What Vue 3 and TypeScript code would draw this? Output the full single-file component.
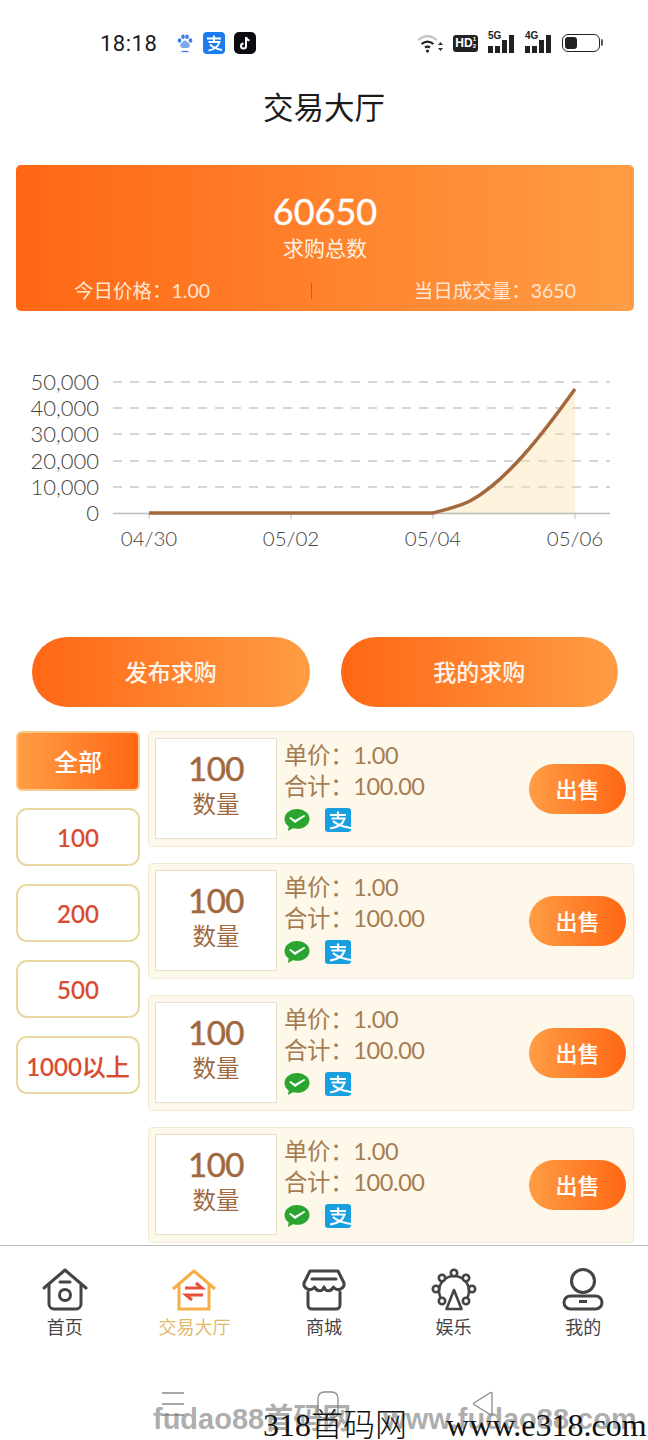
<template>
  <div class="page">
    <!-- 状态栏 -->
    <div class="status">
      <span class="time">18:18</span>
      <div class="status-apps">
        <svg width="18" height="20" viewBox="0 0 18 20" class="paw">
          <ellipse cx="3.5" cy="7.5" rx="1.8" ry="2.3" fill="#3f7fe0" />
          <ellipse cx="7" cy="3.8" rx="1.8" ry="2.3" fill="#3f7fe0" />
          <ellipse cx="11" cy="3.8" rx="1.8" ry="2.3" fill="#3f7fe0" />
          <ellipse cx="14.5" cy="7.5" rx="1.8" ry="2.3" fill="#3f7fe0" />
          <path d="M9 7.5c-2 0-2.5 2-4 3-1.500 1-1 4.500 1.500 4.500h5c2.500 0 3-3.500 1.500-4.500-1.500-1-2-3-4-3z" fill="#7fa9ea" />
          <path d="M5.500 18.500h7" stroke="#3f7fe0" stroke-width="1.300" />
        </svg>
        <svg width="22" height="22" viewBox="0 0 22 22">
          <rect width="22" height="22" rx="4" fill="#1b7cf0" />
          <path d="M4 6.500h14M11 3.500v6M5.500 10h11c-1.500 4.500-5 7.500-11 8.500M7 12.500c3 3 6.500 4.500 12 5.500" stroke="#fff" stroke-width="1.800" fill="none" />
        </svg>
        <svg width="22" height="22" viewBox="0 0 22 22">
          <rect width="22" height="22" rx="5" fill="#0c0c10" />
          <path d="M12 5v9a2.500 2.500 0 1 1-2.500-2.500M12 5c.3 2 1.600 3.200 3.500 3.400" stroke="#fff" stroke-width="2" fill="none" />
        </svg>
      </div>
      <div class="status-right">
        <svg width="26" height="20" viewBox="0 0 26 20">
          <path d="M1 7c6-5 13-5 19 0" stroke="#c4c4c4" stroke-width="2.200" fill="none" />
          <path d="M4.500 11c4-3.200 8-3.200 12 0M8 14.500c2-1.500 3-1.500 5 0" stroke="#222" stroke-width="2.200" fill="none" />
          <circle cx="10.500" cy="18" r="1.600" fill="#222" />
          <path d="M21 12l2.500-3 2.500 3zM21 15l2.500 3 2.500-3z" fill="#333" />
        </svg>
        <span class="hd">HD<small>1<br />2</small></span>
        <span class="signal">
          <span class="net">5G</span>
          <i class="b1"></i><i class="b2"></i><i class="b3"></i><i class="b4"></i>
        </span>
        <span class="signal">
          <span class="net">4G</span>
          <i class="b1"></i><i class="b2"></i><i class="b3"></i><i class="b4"></i>
        </span>
        <span class="battery"><i></i></span>
      </div>
    </div>

    <div class="title">交易大厅</div>

    <!-- 顶部统计 -->
    <div class="hero">
      <div class="hero-num">60650</div>
      <div class="hero-label">求购总数</div>
      <div class="hero-stats">
        <span>今日价格：1.00</span>
        <i class="hero-sep"></i>
        <span>当日成交量：3650</span>
      </div>
    </div>

    <!-- 走势图 -->
    <svg class="chart" width="648" height="326" viewBox="0 311 648 326">
      <line
        v-for="t in yTicks.slice(0, 5)"
        :key="t.label"
        x1="113"
        x2="610"
        :y1="t.y"
        :y2="t.y"
        class="grid"
      />
      <path
        d="M433 513 C447 509 458 507 470 501 C505 482 540 438 575 389 V513 Z"
        fill="rgba(250, 225, 170, 0.42)"
      />
      <line x1="113" x2="610" y1="513.500" y2="513.500" stroke="#bdbdbd" stroke-width="1.500" />
      <line
        v-for="t in xTicks"
        :key="t.label"
        :x1="t.x"
        :x2="t.x"
        y1="513"
        y2="519"
        stroke="#bdbdbd"
      />
      <path
        d="M149 513 H433 C447 509 458 507 470 501 C505 482 540 438 575 389"
        fill="none"
        stroke="#a4683e"
        stroke-width="3.500"
      />
      <text v-for="t in yTicks" :key="t.label" x="99" :y="t.y + 7.500" text-anchor="end" class="axis">{{ t.label }}</text>
      <text v-for="t in xTicks" :key="t.label" :x="t.x" y="546" text-anchor="middle" class="axis axis-x">{{ t.label }}</text>
    </svg>

    <div class="actions">
      <button type="button" class="action">发布求购</button>
      <button type="button" class="action">我的求购</button>
    </div>

    <div class="market">
      <div class="filters">
        <div
          v-for="(f, i) in filters"
          :key="f"
          :class="['filter', { active: i === 0 }]"
        >
          {{ f }}
        </div>
      </div>
      <div class="orders">
        <div v-for="n in 4" :key="n" class="order">
          <div class="qty">
            <div class="qty-num">100</div>
            <div class="qty-label">数量</div>
          </div>
          <div class="info">
            <div class="info-line">单价：1.00</div>
            <div class="info-line">合计：100.00</div>
            <div class="pay">
              <svg width="26" height="24" viewBox="0 0 26 24">
                <path d="M13 1C6 1 .5 5.400 .5 11c0 3 1.600 5.600 4.200 7.400L4 23l5-2.700c1.300.3 2.600.5 4 .5 7 0 12.500-4.400 12.500-9.900S20 1 13 1z" fill="#2aa52f" />
                <path d="M5 10l1.500-1 4.500 3L20 7l1.500 1-10.500 7z" fill="#fff" />
              </svg>
              <svg width="26" height="24" viewBox="0 0 26 24">
                <rect width="26" height="24" rx="3" fill="#189fe0" />
                <path d="M5 7h16M13 3.500V10M6.500 10.500h13C18 16 13 19.500 5 20.500M8 13c4 4 9 5.500 18 7" stroke="#fff" stroke-width="2.200" fill="none" />
              </svg>
            </div>
          </div>
          <button type="button" class="sell">出售</button>
        </div>
      </div>
    </div>

    <!-- 底部导航 -->
    <div class="tabbar">
      <div v-for="t in tabs" :key="t.label" :class="['tab', { current: t.current }]">
        <svg v-if="t.icon === 'home'" width="46" height="44" viewBox="0 0 46 44" class="tab-icon">
          <g fill="none" stroke="#444" stroke-width="3" stroke-linejoin="round" stroke-linecap="round">
            <path d="M2 20 23 2l21 18" />
            <path d="M7 17v19a5 5 0 0 0 5 5h22a5 5 0 0 0 5-5V17" />
            <path d="M18 14h10" />
            <circle cx="23" cy="27" r="5.500" />
          </g>
        </svg>
        <svg v-else-if="t.icon === 'trade'" width="46" height="44" viewBox="0 0 46 44" class="tab-icon">
          <g fill="none" stroke="#f4ae48" stroke-width="3" stroke-linejoin="miter">
            <path d="M2 21 23 3l21 18" />
            <path d="M8 16v25h30V16" />
          </g>
          <path d="M14 20h17l-6-5M32 27H15l6 5" fill="none" stroke="#e8503a" stroke-width="3" />
        </svg>
        <svg v-else-if="t.icon === 'shop'" width="46" height="44" viewBox="0 0 46 44" class="tab-icon">
          <g fill="none" stroke="#444" stroke-width="3" stroke-linejoin="round" stroke-linecap="round">
            <path d="M9 3h28l6 12c1 6-7 9-10.500 4-2.500 5-8 5-9.500 0-1.500 5-7 5-9.500 0C10 24 2 21 3 15z" />
            <path d="M11 11h24" />
            <path d="M7 24v13a4 4 0 0 0 4 4h24a4 4 0 0 0 4-4V24" />
          </g>
        </svg>
        <svg v-else-if="t.icon === 'wheel'" width="46" height="44" viewBox="0 0 46 44" class="tab-icon">
          <g fill="none" stroke="#444" stroke-width="2.600" stroke-linejoin="round">
            <path d="M23 8a15 15 0 0 1 15 15 15 15 0 0 1-5 11M13 34a15 15 0 0 1-5-11A15 15 0 0 1 23 8" />
            <circle cx="23" cy="5" r="3.200" fill="#fff" />
            <circle cx="35" cy="10" r="3.200" fill="#fff" />
            <circle cx="41" cy="21" r="3.200" fill="#fff" />
            <circle cx="35" cy="33" r="3.200" fill="#fff" />
            <circle cx="11" cy="33" r="3.200" fill="#fff" />
            <circle cx="5" cy="21" r="3.200" fill="#fff" />
            <circle cx="11" cy="10" r="3.200" fill="#fff" />
            <path d="M23 22 15.500 41h15zM23 22v4" />
          </g>
        </svg>
        <svg v-else width="46" height="44" viewBox="0 0 46 44" class="tab-icon">
          <g fill="none" stroke="#444" stroke-width="3">
            <circle cx="23" cy="13" r="11.500" />
            <rect x="4" y="28" width="38" height="13" rx="6.500" />
          </g>
          <path d="M19 33.500h8" stroke="#444" stroke-width="3" />
        </svg>
        <span class="tab-label">{{ t.label }}</span>
      </div>
    </div>

    <!-- 系统导航键 -->
    <div class="sysnav">
      <svg width="24" height="30" viewBox="0 0 24 30">
        <path d="M1 2h22M1 13h22M1 24h22" stroke="#8a8a8a" stroke-width="1.300" />
      </svg>
      <svg width="24" height="30" viewBox="0 0 24 30">
        <rect x="2" y="1" width="20" height="26" rx="6" fill="none" stroke="#8a8a8a" stroke-width="1.300" />
      </svg>
      <svg width="24" height="30" viewBox="0 0 24 30">
        <path d="M21 2v21a1 1 0 0 1-1.500.8L3 13.500a1 1 0 0 1 0-1.500L19.500 1.500A1 1 0 0 1 21 2z" fill="none" stroke="#8a8a8a" stroke-width="1.300" />
      </svg>
    </div>

    <!-- 水印 -->
    <div class="mark-grey">fudao88首码网<span class="mark-grey-url">www.fudao88.com</span></div>
    <div class="mark-black">318首码网<span class="mark-url">www.e318.com</span></div>
  </div>
</template>

<script setup lang="ts">
const yTicks = [
  { label: "50,000", y: 382 },
  { label: "40,000", y: 408 },
  { label: "30,000", y: 434 },
  { label: "20,000", y: 461 },
  { label: "10,000", y: 487 },
  { label: "0", y: 513 },
];

const xTicks = [
  { label: "04/30", x: 149 },
  { label: "05/02", x: 291 },
  { label: "05/04", x: 433 },
  { label: "05/06", x: 575 },
];

const filters = ["全部", "100", "200", "500", "1000以上"];

const tabs = [
  { label: "首页", icon: "home" },
  { label: "交易大厅", icon: "trade", current: true },
  { label: "商城", icon: "shop" },
  { label: "娱乐", icon: "wheel" },
  { label: "我的", icon: "user" },
];
</script>

<style>
html,
body {
  margin: 0;
  background: #fff;
}
</style>

<style scoped>
.page {
  position: relative;
  width: 648px;
  height: 1440px;
  overflow: hidden;
  background: #fff;
  font-family: Lato, "Noto Sans CJK SC", sans-serif;
  color: #222;
}

.status {
  display: flex;
  align-items: center;
  height: 86px;
  padding: 0 46px 0 100px;
  box-sizing: border-box;
}

.time {
  font-family: Roboto, sans-serif;
  font-size: 22px;
  letter-spacing: 0.5px;
  color: #1a1a1a;
}

.status-apps {
  display: flex;
  align-items: center;
  gap: 9px;
  margin-left: 19px;
}

.status-right {
  display: flex;
  align-items: center;
  gap: 10px;
  margin-left: auto;
}

.hd {
  display: flex;
  align-items: center;
  height: 17px;
  padding: 0 2px;
  border-radius: 3px;
  background: #222;
  color: #fff;
  font-family: "Liberation Sans", sans-serif;
  font-size: 12px;
  font-weight: 700;
}

.hd small {
  font-size: 6px;
  line-height: 7px;
}

.signal {
  position: relative;
  display: flex;
  align-items: flex-end;
  gap: 2.500px;
  width: 27px;
  height: 20px;
}

.signal .net {
  position: absolute;
  left: 0;
  top: -2px;
  font-family: "Liberation Sans", sans-serif;
  font-size: 10px;
  line-height: 10px;
  font-weight: 700;
  color: #222;
}

.signal i {
  width: 4.500px;
  background: #222;
}

.signal .b1 { height: 7px; }
.signal .b2 { height: 7px; }
.signal .b3 { height: 13px; }
.signal .b4 { height: 18px; }

.battery {
  position: relative;
  display: block;
  width: 38px;
  height: 18px;
  margin-right: 2px;
  box-sizing: border-box;
  border: 1.500px solid #222;
  border-radius: 6px;
  padding: 2px;
}

.battery::after {
  content: "";
  position: absolute;
  right: -4px;
  top: 4px;
  width: 2px;
  height: 7px;
  border-radius: 0 2px 2px 0;
  background: #555;
}

.battery i {
  display: block;
  width: 12px;
  height: 100%;
  background: #222;
  border-radius: 3px;
}

.title {
  height: 42px;
  line-height: 42px;
  text-align: center;
  font-size: 30.500px;
  color: #1b1b1b;
}

.hero {
  display: flex;
  flex-direction: column;
  align-items: center;
  height: 146px;
  margin: 37px 14px 0 16px;
  box-sizing: border-box;
  padding-top: 24px;
  border-radius: 5px;
  background: linear-gradient(90deg, #ff6714, #ff9d45);
  color: #fff;
}

.hero-num {
  font-size: 36px;
  line-height: 44px;
  -webkit-text-stroke: 0.4px #fff;
}

.hero-label {
  font-size: 21px;
  line-height: 30px;
  color: #fdf1e4;
}

.hero-stats {
  display: flex;
  align-items: center;
  justify-content: space-between;
  align-self: stretch;
  margin-top: 14px;
  padding: 0 58px;
  font-size: 19.500px;
  line-height: 28px;
  color: #fde6d2;
}

.hero-sep {
  width: 1px;
  height: 16px;
  background: #a86a3a;
}

.chart {
  display: block;
}

.grid {
  stroke: #c9c9c9;
  stroke-width: 1.500;
  stroke-dasharray: 9 8;
}

.axis {
  font-family: Lato, sans-serif;
  font-size: 22px;
  font-weight: 300;
  fill: #444;
}

.axis-x {
  font-size: 20.500px;
}

.actions {
  display: flex;
  gap: 31px;
  padding: 0 30px 0 32px;
}

.action {
  flex: 1;
  height: 70px;
  padding: 0 0 3px;
  border: none;
  border-radius: 35px;
  background: linear-gradient(90deg, #ff6714, #ff9d45);
  color: #fdf5ec;
  font-family: inherit;
  font-size: 23px;
  font-weight: 500;
}

.market {
  display: flex;
  gap: 8px;
  margin-top: 24px;
  padding: 0 14px 0 16px;
}

.filters {
  display: flex;
  flex-direction: column;
  gap: 18px;
  width: 124px;
  flex-shrink: 0;
}

.filter {
  display: flex;
  align-items: center;
  justify-content: center;
  height: 58px;
  box-sizing: border-box;
  border: 2px solid #e8d9a0;
  border-radius: 11px;
  color: #d94a2e;
  font-size: 24px;
  font-weight: 500;
  -webkit-text-stroke: 0.2px #d94a2e;
}

.filter.active {
  height: 60px;
  margin-bottom: -1px;
  padding-bottom: 2px;
  border-color: #f6c98d;
  border-radius: 6px;
  background: linear-gradient(90deg, #ff9d45, #ff6714);
  color: #fff;
  -webkit-text-stroke: 0;
}

.orders {
  flex: 1;
  display: flex;
  flex-direction: column;
  gap: 16px;
}

.order {
  display: flex;
  align-items: stretch;
  height: 116px;
  box-sizing: border-box;
  padding: 6px 7px 7px 6px;
  border: 1px solid #f1ead6;
  border-radius: 4px;
  background: #fdf8ea;
}

.qty {
  display: flex;
  flex-direction: column;
  align-items: center;
  justify-content: center;
  width: 122px;
  height: 101px;
  box-sizing: border-box;
  padding-bottom: 9px;
  border: 1px solid #e6dfcc;
  background: #fff;
  color: #a0683f;
}

.qty-num {
  font-size: 33px;
  line-height: 40px;
  letter-spacing: -0.5px;
  -webkit-text-stroke: 0.5px #a0683f;
}

.qty-label {
  font-size: 23.500px;
  line-height: 32px;
}

.info {
  flex: 1;
  padding-left: 7px;
  padding-top: 2px;
  color: #a67c52;
  font-size: 23.500px;
  letter-spacing: -0.4px;
}

.info-line {
  height: 31px;
  line-height: 31px;
}

.pay {
  display: flex;
  gap: 15px;
  margin-top: 6px;
}

.sell {
  align-self: center;
  width: 97px;
  height: 50px;
  padding: 0 0 2px;
  border: none;
  border-radius: 25px;
  background: linear-gradient(90deg, #ff9d45, #ff6714);
  color: #fff;
  font-family: inherit;
  font-size: 22px;
  font-weight: 500;
}

.tabbar {
  display: grid;
  grid-template-columns: repeat(5, 1fr);
  margin-top: 2px;
  padding-top: 22px;
  border-top: 1px solid #bdbdbd;
}

.tab {
  display: flex;
  flex-direction: column;
  align-items: center;
}

.tab-icon {
  display: block;
}

.tab-label {
  margin-top: 2px;
  font-size: 18px;
  line-height: 26px;
  color: #444;
}

.tab.current .tab-label {
  color: #e2b96c;
}

.sysnav {
  display: flex;
  justify-content: center;
  gap: 131px;
  margin-top: 51px;
  margin-left: 8px;
}

.mark-grey {
  position: absolute;
  left: 153px;
  top: 1401px;
  font-family: "Liberation Sans", "Noto Sans CJK SC", sans-serif;
  font-size: 29px;
  font-weight: 700;
  line-height: 36px;
  color: rgba(120, 120, 120, 0.62);
  white-space: nowrap;
}

.mark-grey-url {
  margin-left: 32px;
}

.mark-black {
  position: absolute;
  left: 263px;
  top: 1410px;
  font-family: "Liberation Serif", "Noto Sans CJK SC", serif;
  font-size: 32px;
  font-weight: 300;
  line-height: 30px;
  color: #111;
  white-space: nowrap;
}

.mark-url {
  margin-left: 39px;
}
</style>
